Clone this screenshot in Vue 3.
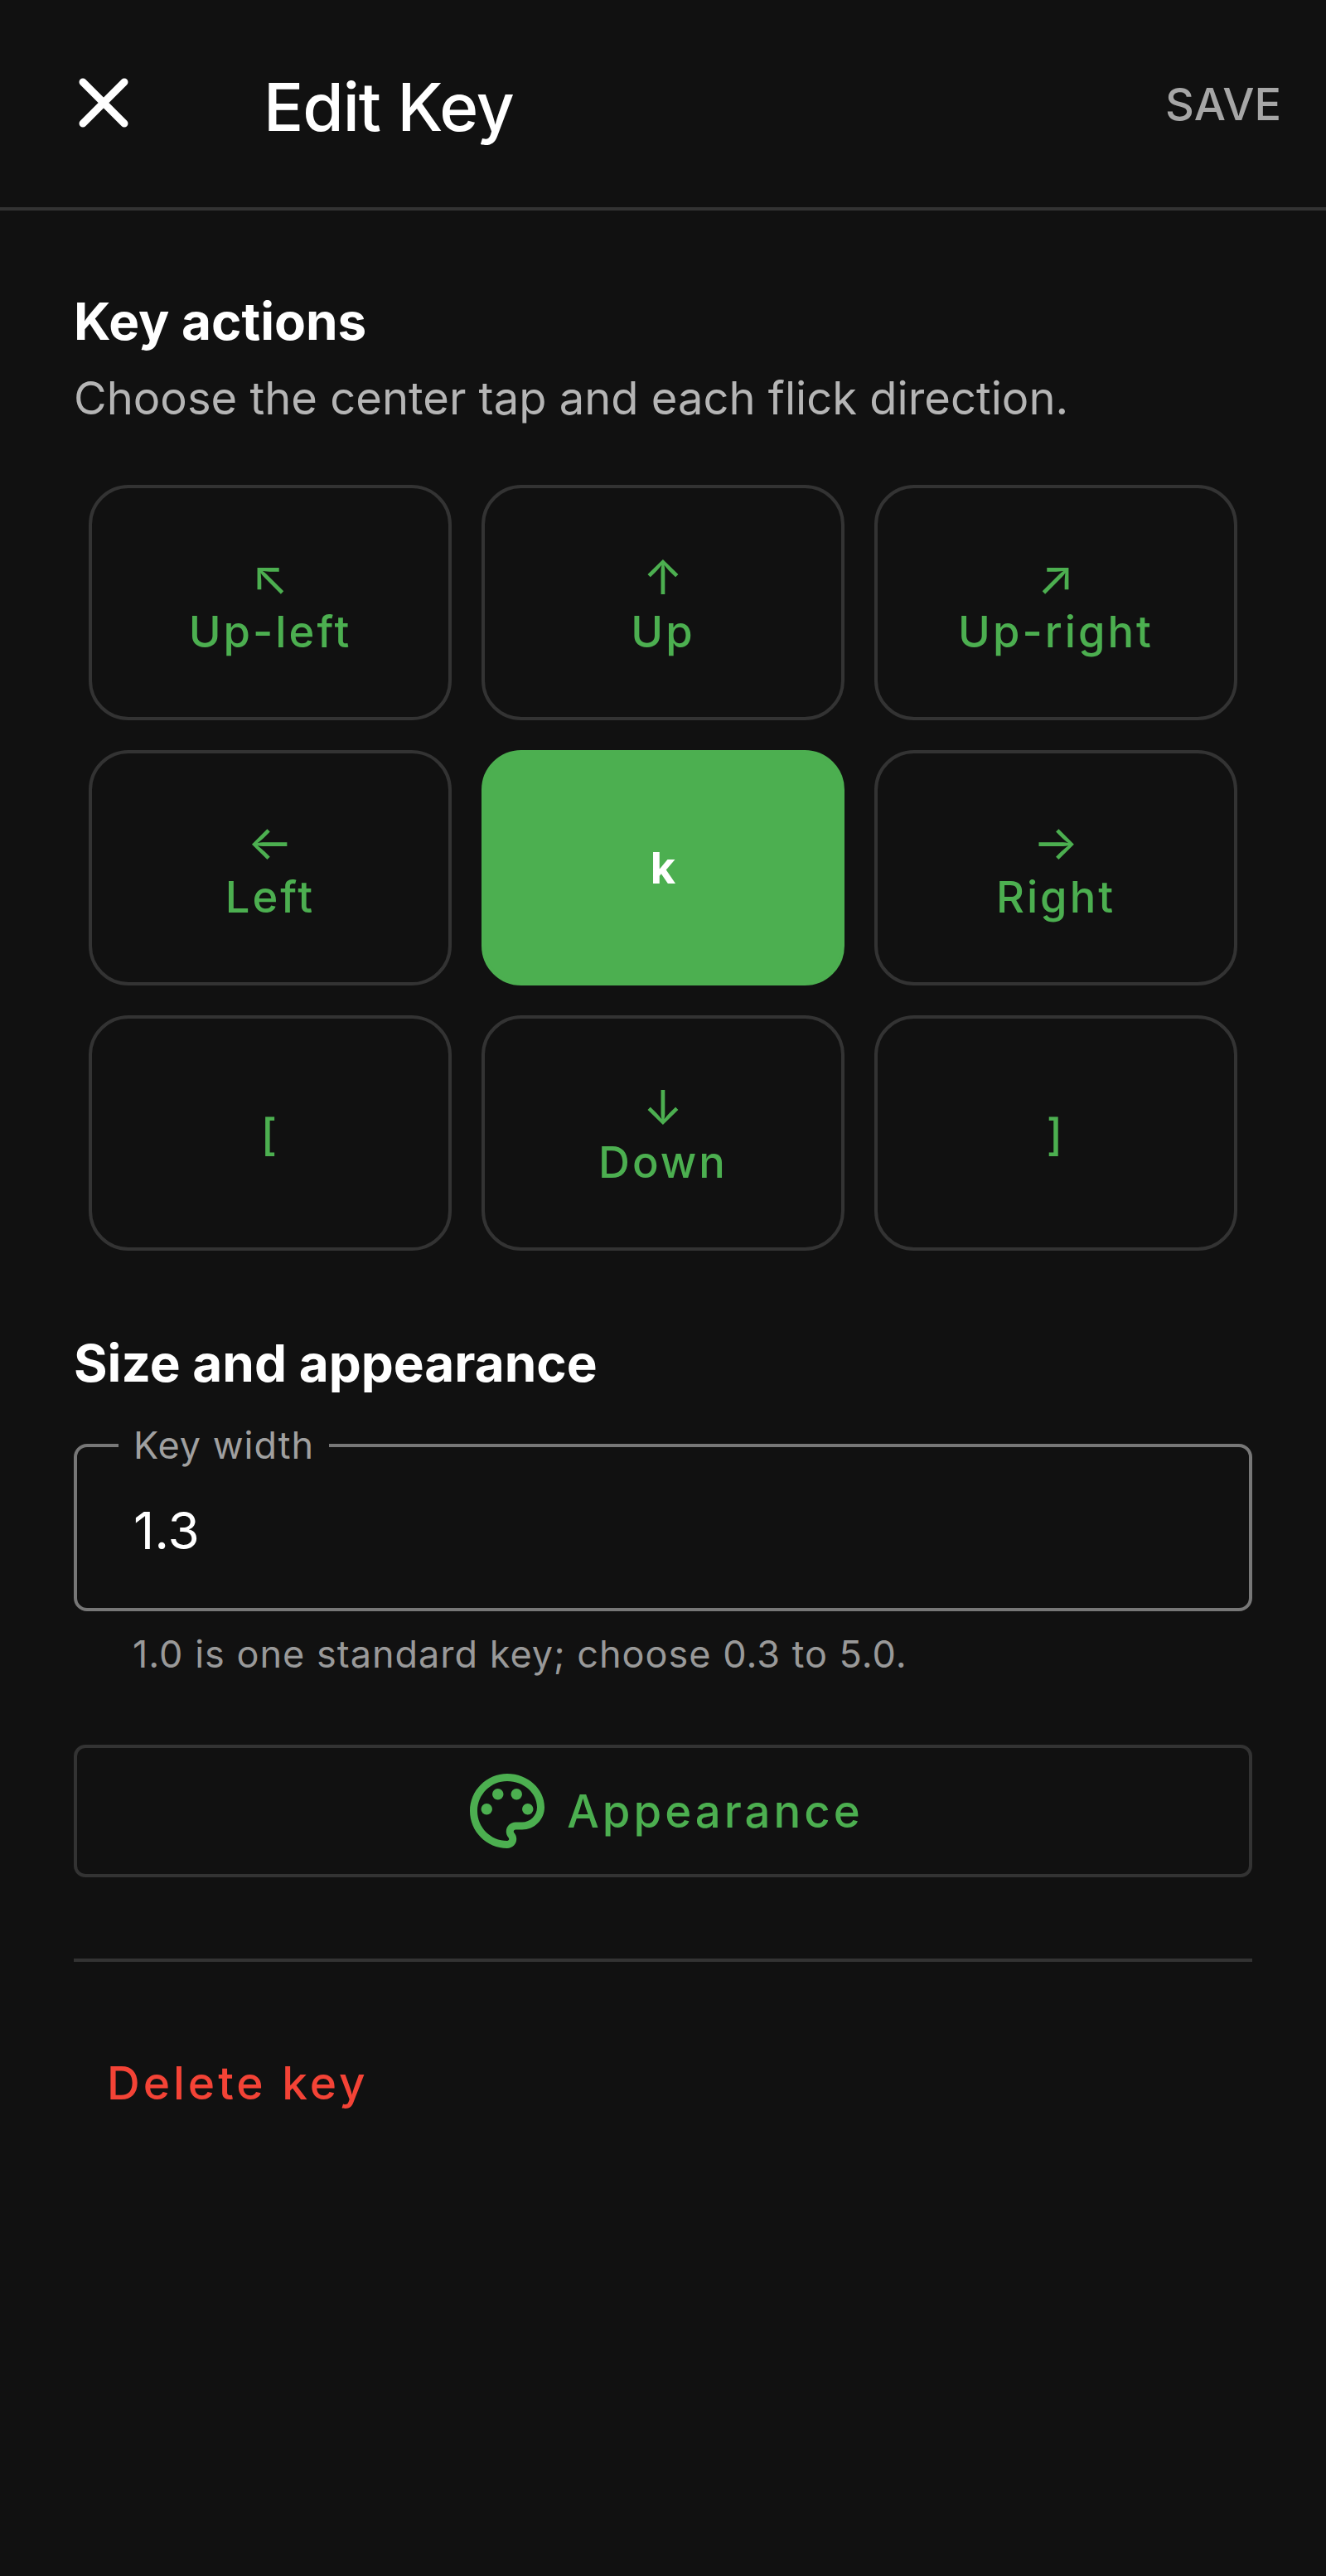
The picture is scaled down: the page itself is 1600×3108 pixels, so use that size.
<script setup>
const keys = [
  { arrow: '↖', label: 'Up-left' },
  { arrow: '↑', label: 'Up' },
  { arrow: '↗', label: 'Up-right' },
  { arrow: '←', label: 'Left' },
  { label: 'k', center: true },
  { arrow: '→', label: 'Right' },
  { label: '[' },
  { arrow: '↓', label: 'Down' },
  { label: ']' },
]
</script>

<template>
  <div class="page">
    <header class="topbar">
      <svg class="close" viewBox="0 0 60 60" width="60" height="60">
        <path d="M5 5 L55 55 M55 5 L5 55" />
      </svg>
      <h1>Edit Key</h1>
      <span class="save">SAVE</span>
    </header>

    <main class="content">
      <h2>Key actions</h2>
      <p class="sub">Choose the center tap and each flick direction.</p>

      <div class="grid">
        <button v-for="k in keys" :key="k.label" class="key" :class="{ center: k.center }">
          <span v-if="k.arrow" class="arrow">{{ k.arrow }}</span>
          <span>{{ k.label }}</span>
        </button>
      </div>

      <h2 class="second">Size and appearance</h2>

      <fieldset class="field">
        <legend>Key width</legend>
        <div class="value">1.3</div>
      </fieldset>
      <p class="hint">1.0 is one standard key; choose 0.3 to 5.0.</p>

      <button class="appearance">
        <svg viewBox="0 0 24 24" width="108" height="108">
          <path d="M12 22C6.49 22 2 17.51 2 12S6.49 2 12 2s10 4.04 10 9c0 3.31-2.69 6-6 6h-1.77c-.28 0-.5.22-.5.5 0 .12.05.23.13.33.41.47.64 1.06.64 1.67 0 1.38-1.12 2.5-2.5 2.5zm0-18c-4.41 0-8 3.59-8 8s3.59 8 8 8c.28 0 .5-.22.5-.5 0-.16-.08-.28-.14-.35-.41-.46-.63-1.05-.63-1.65 0-1.38 1.12-2.5 2.5-2.5H16c2.21 0 4-1.79 4-4 0-3.86-3.59-7-8-7z" />
          <circle cx="6.5" cy="11.5" r="1.5" />
          <circle cx="9.5" cy="7.5" r="1.5" />
          <circle cx="14.5" cy="7.5" r="1.5" />
          <circle cx="17.5" cy="11.5" r="1.5" />
        </svg>
        <span>Appearance</span>
      </button>

      <div class="divider"></div>

      <span class="delete">Delete key</span>
    </main>
  </div>
</template>

<style>
body {
  background: #111111;
}
</style>

<style scoped>
.page {
  min-height: 3108px;
  background: #111111;
  color: #fff;
  font-family: Inter, "Noto Sans", sans-serif;
}

.topbar {
  display: flex;
  align-items: center;
  height: 254px;
  padding: 0 54px 0 95px;
  box-sizing: border-box;
  border-bottom: 4px solid #333333;
}

.close {
  fill: none;
  stroke: #fff;
  stroke-width: 9;
  stroke-linecap: round;
  margin-top: -2px;
}

h1 {
  margin: 6px 0 0 163px;
  font-size: 80px;
  font-weight: 500;
  letter-spacing: -1px;
}

.save {
  margin-left: auto;
  font-size: 54px;
  font-weight: 500;
  color: #a6a6a6;
}

.content {
  padding: 0 89px;
}

h2 {
  margin: 0;
  padding-top: 98px;
  font-size: 62px;
  line-height: 72px;
  font-weight: 700;
}

.sub {
  margin: 18px 0 0;
  font-size: 54.3px;
  line-height: 76px;
  color: #b5b5b5;
}

.grid {
  display: grid;
  grid-template-columns: repeat(3, 1fr);
  grid-auto-rows: 284px;
  gap: 36px;
  margin: 67px 18px 0;
}

.key {
  display: flex;
  flex-direction: column;
  align-items: center;
  justify-content: center;
  border: 4px solid #333333;
  border-radius: 48px;
  background: transparent;
  color: #4caf50;
  font-family: inherit;
  font-size: 52.5px;
  font-weight: 500;
  line-height: 62px;
  letter-spacing: 3px;
  padding: 4px 0 0;
}

.key .arrow {
  font-size: 58px;
  font-weight: 400;
  margin-bottom: 4px;
  letter-spacing: 0;
}

.key.center {
  background: #4caf50;
  border-color: #4caf50;
  color: #fff;
  font-weight: 700;
  letter-spacing: 0;
  padding: 0;
}

.second {
  padding-top: 100px;
}

.field {
  margin: 38px 0 0;
  padding: 0 0 0 68px;
  height: 225px;
  box-sizing: border-box;
  border: 4px solid #777777;
  border-radius: 16px;
}

legend {
  padding: 0 18px;
  margin-left: -18px;
  font-size: 45px;
  line-height: 50px;
  letter-spacing: 1px;
  color: #a0a0a0;
}

.value {
  font-size: 62px;
  line-height: 72px;
  margin-top: 42px;
}

.hint {
  margin: 24px 0 0 71px;
  font-size: 45px;
  line-height: 56px;
  letter-spacing: 1px;
  color: #999999;
}

.appearance {
  display: flex;
  align-items: center;
  justify-content: center;
  gap: 18px;
  width: 100%;
  height: 160px;
  margin-top: 81px;
  border: 4px solid #333333;
  border-radius: 14px;
  background: transparent;
  color: #4caf50;
  font-family: inherit;
  font-size: 54.5px;
  font-weight: 500;
  letter-spacing: 4px;
}

.appearance svg {
  fill: #4caf50;
}

.divider {
  height: 4px;
  margin-top: 98px;
  background: #333333;
}

.delete {
  display: block;
  margin: 114px 0 0 40px;
  font-size: 55px;
  line-height: 64px;
  font-weight: 500;
  letter-spacing: 4px;
  color: #f44336;
}
</style>
